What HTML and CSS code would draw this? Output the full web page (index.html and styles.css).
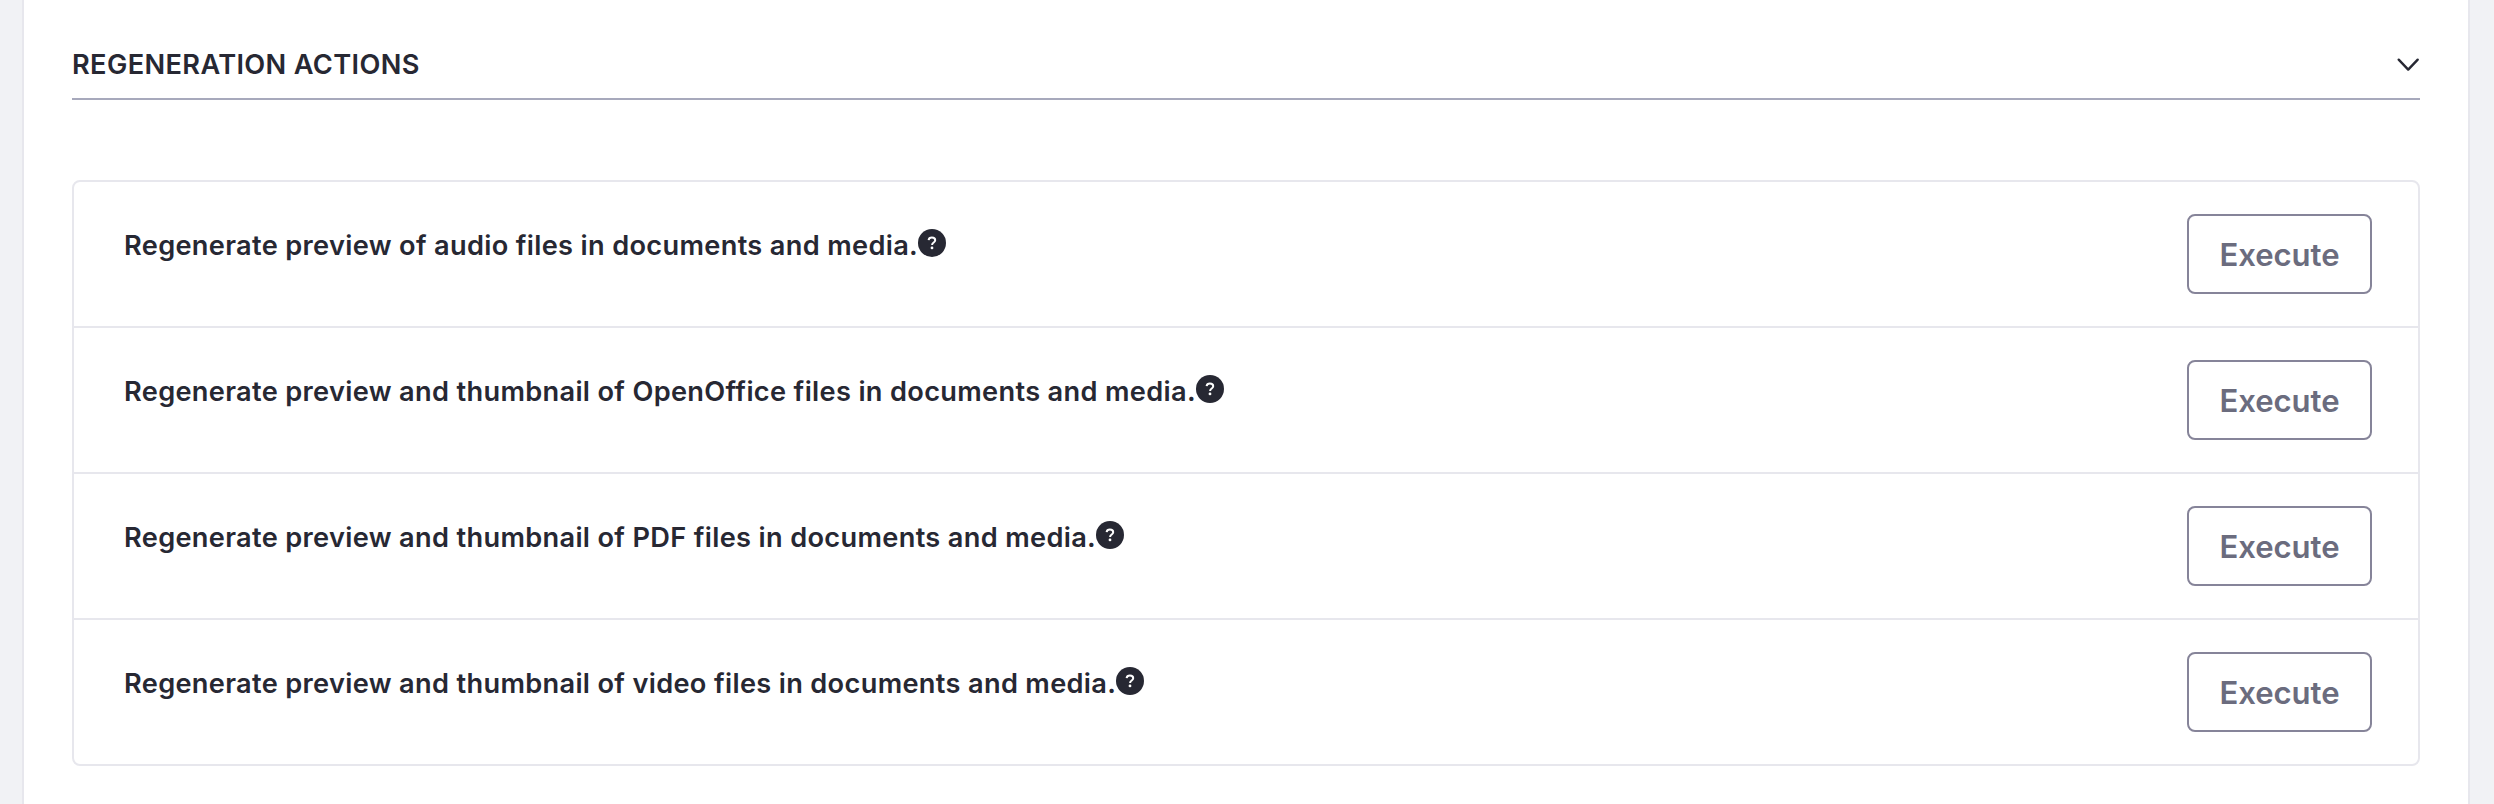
FILE: index.html
```html
<!DOCTYPE html>
<html lang="en"><head><meta charset="utf-8"><title>Regeneration Actions</title><link rel="stylesheet" href="styles.css"></head>
<body><main class="sheet">
<header class="header"><h2 class="title">REGENERATION ACTIONS</h2>
<svg class="chevron" viewBox="0 0 24 24"><path d="M2.700 6.700l9.500 9.900L21.700 6.700"/></svg></header>
<ul class="list">
<li class="row"><span class="label">Regenerate preview of audio files in documents and media.</span><svg class="help" viewBox="0 0 28 28"><circle cx="14" cy="14" r="14"/><path d="M10.600 11.200c.2-1.600 1.500-2.600 3.300-2.600s3.300 1 3.300 2.700c0 2.200-3.100 2.200-3.100 4.600"/><circle class="dot" cx="14" cy="18.900" r="1.400"/></svg><button class="button">Execute</button></li>
<li class="row"><span class="label">Regenerate preview and thumbnail of OpenOffice files in documents and media.</span><svg class="help" viewBox="0 0 28 28"><circle cx="14" cy="14" r="14"/><path d="M10.600 11.200c.2-1.600 1.500-2.600 3.300-2.600s3.300 1 3.300 2.700c0 2.200-3.100 2.200-3.100 4.600"/><circle class="dot" cx="14" cy="18.900" r="1.400"/></svg><button class="button">Execute</button></li>
<li class="row"><span class="label">Regenerate preview and thumbnail of PDF files in documents and media.</span><svg class="help" viewBox="0 0 28 28"><circle cx="14" cy="14" r="14"/><path d="M10.600 11.200c.2-1.600 1.500-2.600 3.300-2.600s3.300 1 3.300 2.700c0 2.200-3.100 2.200-3.100 4.600"/><circle class="dot" cx="14" cy="18.900" r="1.400"/></svg><button class="button">Execute</button></li>
<li class="row"><span class="label">Regenerate preview and thumbnail of video files in documents and media.</span><svg class="help" viewBox="0 0 28 28"><circle cx="14" cy="14" r="14"/><path d="M10.600 11.200c.2-1.600 1.500-2.600 3.300-2.600s3.300 1 3.300 2.700c0 2.200-3.100 2.200-3.100 4.600"/><circle class="dot" cx="14" cy="18.900" r="1.400"/></svg><button class="button">Execute</button></li>
</ul></main></body></html>
```

FILE: styles.css
```css
* { box-sizing: border-box; }
body { margin: 0; height: 804px; overflow: hidden; padding: 0 24px 0 22px; background: #f1f2f5; color: #272833; font-family: Inter, sans-serif; }
.sheet { height: 804px; padding: 0 48px; background: #fff; border: solid #e7e7ed; border-width: 0 2px; }
.header { display: flex; align-items: center; justify-content: space-between; height: 100px; padding-top: 32px; border-bottom: 2px solid #a7a9bc; }
.title { margin: 0; font-size: 27.2px; line-height: 42px; font-weight: 600; letter-spacing: 0.36px; }
.chevron { width: 24px; height: 24px; fill: none; stroke: #272833; stroke-width: 2.4; stroke-linecap: round; stroke-linejoin: round; }
.list { list-style: none; margin: 80px 0 0; padding: 0; border: 2px solid #e7e7ed; border-radius: 8px; }
.row { display: flex; align-items: flex-start; height: 146px; padding: 32px 46px 0 50px; border-bottom: 2px solid #e7e7ed; }
.row:last-child { height: 144px; border-bottom: 0; }
.label { font-size: 27.2px; line-height: 42px; margin-top: 11px; font-weight: 600; letter-spacing: 0.33px; white-space: nowrap; }
.help { flex: none; width: 28px; height: 28px; margin-top: 15px; fill: #272833; }
.help path { fill: none; stroke: #fff; stroke-width: 2; }
.help .dot { fill: #fff; }
.button { width: 185px; height: 80px; margin-left: auto; padding: 1px 0 0; border: 2px solid #868499; border-radius: 8px; background: #fff; color: #6b6c7e; font: 600 31.1px Inter, sans-serif; letter-spacing: -0.05px; }
```
